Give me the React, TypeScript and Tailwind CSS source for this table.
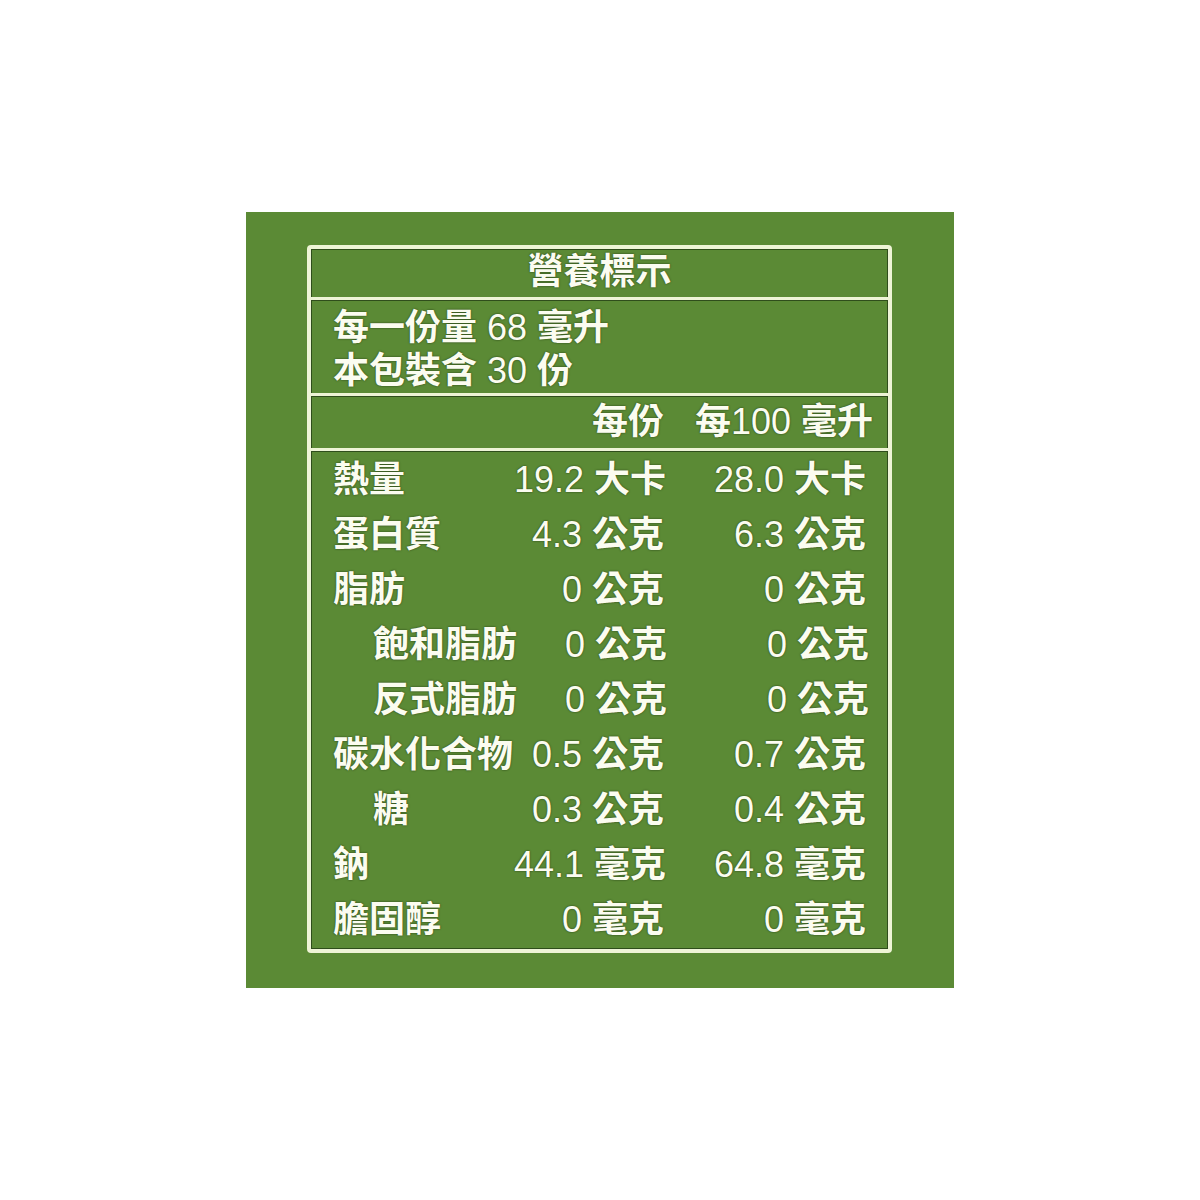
import React from 'react';

// Rows of the nutrition table: label, per serving, per 100 ml, indented or not
const rows = [
  { label: '熱量', a: '19.2', au: '大卡', b: '28.0', bu: '大卡', indent: false },
  { label: '蛋白質', a: '4.3', au: '公克', b: '6.3', bu: '公克', indent: false },
  { label: '脂肪', a: '0', au: '公克', b: '0', bu: '公克', indent: false },
  { label: '飽和脂肪', a: '0', au: '公克', b: '0', bu: '公克', indent: true },
  { label: '反式脂肪', a: '0', au: '公克', b: '0', bu: '公克', indent: true },
  { label: '碳水化合物', a: '0.5', au: '公克', b: '0.7', bu: '公克', indent: false },
  { label: '糖', a: '0.3', au: '公克', b: '0.4', bu: '公克', indent: true },
  { label: '鈉', a: '44.1', au: '毫克', b: '64.8', bu: '毫克', indent: false },
  { label: '膽固醇', a: '0', au: '毫克', b: '0', bu: '毫克', indent: false },
];

const line = 'h-[3px] bg-[#eef4d6] shadow-[0_1px_0_#2f4d1b]';

const Num: React.FC<{ children: React.ReactNode }> = ({ children }) => (
  <span className="font-normal">{children}</span>
);

const App: React.FC = () => {
  return (
    <div className="min-h-[1200px] bg-white pt-[212px] pl-[246px]">
      <div className="w-[708px] h-[776px] bg-[#5b8a35] pt-[33px] pl-[61px]">
        <div
          className="w-[585px] h-[708px] border-[4px] border-[#eef4d6] rounded-[4px] shadow-[inset_0_0_0_1px_#2f4d1b] flex flex-col text-[#fbfcf0] text-[36px] font-bold [text-shadow:0_0_2px_#1e3510]"
          style={{ fontFamily: '"Liberation Sans", "Noto Sans CJK TC", sans-serif' }}
        >
          {/* Title */}
          <div className="h-[48px] flex items-center justify-center leading-none pb-[2px]">營養標示</div>
          <div className={line} />

          {/* Serving info */}
          <div className="h-[93px] flex flex-col justify-center pl-[22px] leading-[43px] pt-[4px]">
            <div className="whitespace-nowrap">
              每一份量 <Num>68</Num> 毫升
            </div>
            <div className="whitespace-nowrap">
              本包裝含 <Num>30</Num> 份
            </div>
          </div>
          <div className={line} />

          {/* Column header */}
          <div className="h-[52px] flex items-center leading-none pr-[15px]">
            <div className="flex-1" />
            <div className="w-[150px] text-right">每份</div>
            <div className="w-[209px] text-right whitespace-nowrap">
              每<Num>100</Num> 毫升
            </div>
          </div>
          <div className={line} />

          {/* Nutrient rows */}
          <div className="flex flex-col pt-[1px] pl-[22px] pr-[22px]">
            {rows.map((r) => (
              <div key={r.label} className="h-[55px] flex items-center leading-none">
                <div className={`flex-1 whitespace-nowrap ${r.indent ? 'pl-[40px]' : ''}`}>{r.label}</div>
                <div className="w-[150px] shrink-0 text-right whitespace-nowrap">
                  <Num>{r.a}</Num> {r.au}
                </div>
                <div className="w-[202px] shrink-0 text-right whitespace-nowrap">
                  <Num>{r.b}</Num> {r.bu}
                </div>
              </div>
            ))}
          </div>
        </div>
      </div>
    </div>
  );
};

export default App;
